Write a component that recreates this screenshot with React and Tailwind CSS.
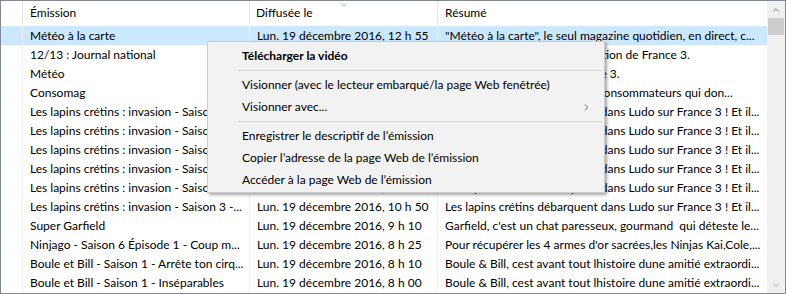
import { ChevronDown, ChevronUp, ChevronRight } from 'lucide-react';

const rows = [
    { title: 'Météo à la carte', date: 'Lun. 19 décembre 2016, 12 h 55', summary: '"Météo à la carte", le seul magazine quotidien, en direct, c...', selected: true },
    { title: '12/13 : Journal national', date: 'Lun. 19 décembre 2016, 12 h 00', summary: 'Le journal national de la rédaction de France 3.' },
    { title: 'Météo', date: 'Lun. 19 décembre 2016, 11 h 55', summary: 'Le bulletin de météo de France 3.' },
    { title: 'Consomag', date: 'Lun. 19 décembre 2016, 11 h 50', summary: 'Le magazine qui conseille les consommateurs qui don...' },
    { title: 'Les lapins crétins : invasion - Saison 3 -...', date: 'Lun. 19 décembre 2016, 11 h 40', summary: 'Les lapins crétins débarquent dans Ludo sur France 3 ! Et il...' },
    { title: 'Les lapins crétins : invasion - Saison 3 -...', date: 'Lun. 19 décembre 2016, 11 h 30', summary: 'Les lapins crétins débarquent dans Ludo sur France 3 ! Et il...' },
    { title: 'Les lapins crétins : invasion - Saison 3 -...', date: 'Lun. 19 décembre 2016, 11 h 20', summary: 'Les lapins crétins débarquent dans Ludo sur France 3 ! Et il...' },
    { title: 'Les lapins crétins : invasion - Saison 3 -...', date: 'Lun. 19 décembre 2016, 11 h 10', summary: 'Les lapins crétins débarquent dans Ludo sur France 3 ! Et il...' },
    { title: 'Les lapins crétins : invasion - Saison 3 -...', date: 'Lun. 19 décembre 2016, 11 h 00', summary: 'Les lapins crétins débarquent dans Ludo sur France 3 ! Et il...' },
    { title: 'Les lapins crétins : invasion - Saison 3 -...', date: 'Lun. 19 décembre 2016, 10 h 50', summary: 'Les lapins crétins débarquent dans Ludo sur France 3 ! Et il...' },
    { title: 'Super Garfield', date: 'Lun. 19 décembre 2016, 9 h 10', summary: "Garfield, c'est un chat paresseux, gourmand  qui déteste le..." },
    { title: 'Ninjago - Saison 6 Épisode 1 - Coup m...', date: 'Lun. 19 décembre 2016, 8 h 25', summary: "Pour récupérer les 4 armes d'or sacrées,les Ninjas Kai,Cole,..." },
    { title: 'Boule et Bill - Saison 1 - Arrête ton cirq...', date: 'Lun. 19 décembre 2016, 8 h 10', summary: 'Boule & Bill, cest avant tout lhistoire dune amitié extraordi...' },
    { title: 'Boule et Bill - Saison 1 - Inséparables', date: 'Lun. 19 décembre 2016, 8 h 00', summary: 'Boule & Bill, cest avant tout lhistoire dune amitié extraordi...' },
];

function Cell({ width, children }) {
    return (
        <div className={`${width} shrink-0 h-full border-l border-[#f0f0f0] pl-[7px] flex items-center overflow-hidden whitespace-pre`}>
            {children}
        </div>
    );
}

function Row({ row }) {
    return (
        <div className={`flex h-[19px] ${row.selected ? 'bg-[#cce8ff]' : ''}`}>
            <div className="w-[21px] shrink-0" />
            <Cell width="w-[227px]">{row.title}</Cell>
            <Cell width="w-[188px]">{row.date}</Cell>
            <Cell width="w-[330px]">{row.summary}</Cell>
        </div>
    );
}

function MenuItem({ children, bold, submenu }) {
    return (
        <div className={`h-[22px] flex items-center pl-[34px] pr-[12px] ${bold ? 'font-bold' : ''}`}>
            <span className="flex-1">{children}</span>
            {submenu && <ChevronRight size={11} strokeWidth={1.5} className="text-[#333]" />}
        </div>
    );
}

function Separator() {
    return (
        <div className="h-[7px] flex items-center pl-[30px] pr-[2px]">
            <div className="h-px w-full bg-[#d7d7d7]" />
        </div>
    );
}

export default function App() {
    return (
        <div className="relative w-[786px] h-[294px] bg-white border border-[#828790] overflow-hidden text-[12px] text-black leading-none" style={{ fontFamily: 'Lato, "Noto Sans", sans-serif' }}>
            <div className="flex h-full">
                <div className="w-[766px] shrink-0">
                    {/* header */}
                    <div className="relative flex h-[24px] mb-px">
                        <div className="w-[21px] shrink-0" />
                        <div className="w-[227px] shrink-0 border-l border-[#e5e5e5] pl-[7px] flex items-center">Émission</div>
                        <div className="w-[188px] shrink-0 border-l border-[#e5e5e5] pl-[6px] flex items-center">Diffusée le</div>
                        <div className="w-[330px] shrink-0 border-l border-[#e5e5e5] pl-[7px] flex items-center">Résumé</div>
                        <ChevronDown size={10} strokeWidth={1.5} className="absolute left-[338px] top-[-1px] text-[#777]" />
                    </div>
                    {rows.map((row, i) => (
                        <Row key={i} row={row} />
                    ))}
                </div>
                {/* scrollbar */}
                <div className="w-[18px] shrink-0 bg-[#f0f0f0] flex flex-col items-center">
                    <div className="h-[17px] flex items-center justify-center">
                        <ChevronUp size={10} strokeWidth={2} className="text-[#606060]" />
                    </div>
                    <div className="w-[16px] h-[17px] bg-[#cdcdcd]" />
                    <div className="flex-1" />
                    <div className="h-[17px] flex items-center justify-center">
                        <ChevronDown size={10} strokeWidth={2} className="text-[#a0a0a0]" />
                    </div>
                </div>
            </div>

            {/* context menu */}
            <div className="absolute left-[206px] top-[40px] w-[398px] bg-[#f2f2f2] border border-[#cccccc] pt-[3px] pb-px shadow-[2px_2px_3px_rgba(0,0,0,0.35)]">
                <MenuItem bold>Télécharger la vidéo</MenuItem>
                <Separator />
                <MenuItem>Visionner (avec le lecteur embarqué/la page Web fenêtrée)</MenuItem>
                <MenuItem submenu>Visionner avec...</MenuItem>
                <Separator />
                <MenuItem>Enregistrer le descriptif de l’émission</MenuItem>
                <MenuItem>Copier l’adresse de la page Web de l’émission</MenuItem>
                <MenuItem>Accéder à la page Web de l’émission</MenuItem>
            </div>
        </div>
    );
}
